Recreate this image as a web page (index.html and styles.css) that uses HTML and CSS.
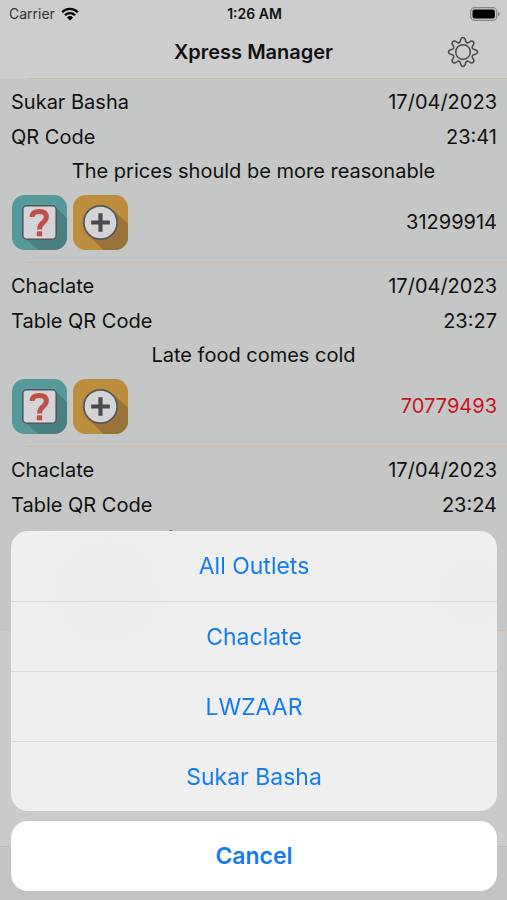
FILE: index.html
```html
<!DOCTYPE html>
<html lang="en">
<head>
<meta charset="utf-8">
<meta name="viewport" content="width=device-width, initial-scale=1">
<title>Xpress Manager</title>
<link rel="stylesheet" href="styles.css">
</head>
<body>
<svg class="defs" aria-hidden="true">
  <symbol id="icon-question" viewBox="0 0 56 56">
    <rect width="56" height="56" rx="13" fill="#55999a"/>
    <path d="M44 12 56 24V43A13 13 0 0 1 43 56H27L12 43Z" fill="#4a807f"/>
    <rect x="11" y="11" width="34" height="34" rx="4" fill="#d4d4d6" stroke="#55585b" stroke-width="1.6"/>
    <path d="M20.500 22.500C20.500 18 23.500 16.800 27.800 16.800S35 18.500 35 22.500C35 28 28 28 28 35" fill="none" stroke="#bd5148" stroke-width="5"/>
    <rect x="25.300" y="37" width="5.400" height="5" fill="#bd5148"/>
  </symbol>
  <symbol id="icon-plus" viewBox="0 0 56 56">
    <rect width="56" height="56" rx="13" fill="#bc8d3c"/>
    <path d="M41 16 56 29V43A13 13 0 0 1 43 56H31L15 40Z" fill="#987438"/>
    <circle cx="28" cy="28" r="17" fill="#d4d4d6" stroke="#55585b" stroke-width="1.800"/>
    <path d="M28 18.500V37.500M18.500 28H37.500" stroke="#484a4c" stroke-width="4.200"/>
  </symbol>
</svg>

<div class="app">
  <header class="header">
    <div class="status">
      <span class="carrier">Carrier
        <svg class="wifi" viewBox="0 0 18 14" aria-hidden="true">
          <path d="M1.200 5.200A11 11 0 0 1 16.800 5.200M4 8.200A7 7 0 0 1 14 8.200" fill="none" stroke="#000" stroke-width="2.300"/>
          <path d="M9 13.500 6 10.500A4.300 4.300 0 0 1 12 10.500Z"/>
        </svg>
      </span>
      <span class="clock">1:26 AM</span>
      <svg class="battery" viewBox="0 0 30 14" aria-hidden="true">
        <rect x=".7" y=".7" width="26" height="12.600" rx="3.800" fill="none" stroke="#888" stroke-width="1.200"/>
        <rect x="2.500" y="2.500" width="22.400" height="9" rx="2"/>
        <path d="M28 4.700Q30 5.500 30 7T28 9.300Z" fill="#888"/>
      </svg>
    </div>
    <div class="nav">
      <h1 class="title">Xpress Manager</h1>
      <button class="settings" type="button" aria-label="Settings">
        <svg viewBox="0 0 32 32" aria-hidden="true">
          <g fill="none" stroke="#4b4b4b" stroke-width="1.500" stroke-linejoin="round">
            <circle cx="16" cy="16" r="7.300"/>
            <path d="M13.300 5.300 C13.700 3.500 13.700 1.500 16 1.500 S18.300 3.500 18.700 5.300 C19.100 6.700 20.700 7.300 21.700 6.500 C23.200 5.500 24.700 4.100 26.300 5.700 S26.500 8.800 25.500 10.300 C24.700 11.300 25.300 12.900 26.700 13.300 C28.500 13.700 30.500 13.700 30.500 16 S28.500 18.300 26.700 18.700 C25.300 19.100 24.700 20.700 25.500 21.700 C26.500 23.200 27.900 24.700 26.300 26.300 S23.200 26.500 21.700 25.500 C20.700 24.700 19.100 25.300 18.700 26.700 C18.300 28.500 18.300 30.500 16 30.500 S13.700 28.500 13.300 26.700 C12.900 25.300 11.300 24.700 10.300 25.500 C8.800 26.500 7.300 27.900 5.700 26.300 S5.500 23.200 6.500 21.700 C7.300 20.700 6.700 19.100 5.300 18.700 C3.500 18.300 1.500 18.300 1.500 16 S3.500 13.700 5.300 13.300 C6.700 12.900 7.300 11.300 6.500 10.300 C5.500 8.800 4.100 7.300 5.700 5.700 S8.800 5.500 10.300 6.500 C11.300 7.300 12.900 6.700 13.300 5.300Z"/>
          </g>
        </svg>
      </button>
    </div>
  </header>

  <main class="list">
    <article class="row">
      <div class="line"><span>Sukar Basha</span><span>17/04/2023</span></div>
      <div class="line"><span>QR Code</span><span>23:41</span></div>
      <p class="comment">The prices should be more reasonable</p>
      <div class="actions">
        <button type="button" aria-label="Question"><svg><use href="#icon-question"/></svg></button>
        <button type="button" aria-label="Add"><svg><use href="#icon-plus"/></svg></button>
        <span class="phone">31299914</span>
      </div>
    </article>
    <article class="row">
      <div class="line"><span>Chaclate</span><span>17/04/2023</span></div>
      <div class="line"><span>Table QR Code</span><span>23:27</span></div>
      <p class="comment">Late food comes cold</p>
      <div class="actions">
        <button type="button" aria-label="Question"><svg><use href="#icon-question"/></svg></button>
        <button type="button" aria-label="Add"><svg><use href="#icon-plus"/></svg></button>
        <span class="phone alert">70779493</span>
      </div>
    </article>
    <article class="row">
      <div class="line"><span>Chaclate</span><span>17/04/2023</span></div>
      <div class="line"><span>Table QR Code</span><span>23:24</span></div>
      <p class="comment">food was delicious</p>
      <div class="actions"></div>
    </article>
  </main>
  <footer class="tabbar"></footer>
</div>

<div class="sheet" role="dialog" aria-label="Choose outlet">
  <div class="options">
    <button type="button">All Outlets</button>
    <button type="button">Chaclate</button>
    <button type="button">LWZAAR</button>
    <button type="button">Sukar Basha</button>
  </div>
  <button class="cancel" type="button">Cancel</button>
</div>
</body>
</html>
```
FILE: styles.css
```css
* { box-sizing: border-box; }

body {
  margin: 0;
  background: #cbcbcb;
  color: #111;
  font-family: Inter, "Liberation Sans", sans-serif;
  font-size: 20px;
}

button {
  padding: 0;
  border: 0;
  background: none;
  font: inherit;
  cursor: pointer;
}

svg { display: block; }

.defs {
  position: absolute;
  width: 0;
  height: 0;
}

.app {
  display: flex;
  flex-direction: column;
  min-height: 100vh;
}

.header { background: #cdcdcd; }

.status {
  display: grid;
  grid-template-columns: 1fr auto 1fr;
  align-items: center;
  height: 27px;
  padding: 0 7px 0 9px;
  font-size: 14px;
}

.carrier {
  display: flex;
  align-items: center;
  gap: 6px;
  color: #333;
}

.wifi {
  width: 18px;
  height: 14px;
}

.clock { font-weight: 600; }

.battery {
  justify-self: end;
  width: 30px;
  height: 14px;
}

.nav {
  display: grid;
  grid-template-columns: 1fr auto 1fr;
  align-items: center;
  height: 51px;
  padding: 0 28px 2px;
}

.title {
  grid-column: 2;
  margin: 0;
  font-size: 20px;
  font-weight: 600;
}

.settings { justify-self: end; }

.settings svg {
  width: 32px;
  height: 32px;
}

.list::before,
.row::after {
  content: "";
  display: block;
  height: 1px;
  margin-left: 27px;
  background: #cbbba8;
}

.list {
  flex: 1;
}

.row {
  background: #c5c7c6;
}

.line {
  display: flex;
  justify-content: space-between;
  padding: 0 10px 0 11px;
  line-height: 35px;
}

.row .line:first-child {
  padding-top: 6px;
}

.comment {
  margin: 0;
  line-height: 32px;
  text-align: center;
}

.actions {
  display: flex;
  align-items: center;
  gap: 6px;
  height: 75px;
  padding: 3px 10px 8px 12px;
}

.actions svg {
  width: 55px;
  height: 55px;
}

.phone { margin-left: auto; }

.alert { color: #c8141e; }

.tabbar {
  height: 54px;
  border-top: 1px solid #b9b9b9;
  background: #c4c4c4;
}

.sheet {
  position: fixed;
  right: 10px;
  bottom: 9px;
  left: 11px;
  display: grid;
  gap: 10px;
  color: #147cf0;
  font-size: 23px;
}

.sheet button {
  height: 70px;
  color: inherit;
}

.options {
  display: grid;
  overflow: hidden;
  border-radius: 17px;
  background:
    radial-gradient(circle at 95px 60px, #edece9, transparent 90px),
    radial-gradient(circle at 460px 60px, #efecea, transparent 60px),
    #efefef;
}

.options button + button {
  border-top: 1px solid #d9d9d9;
}

.sheet .cancel {
  border-radius: 17px;
  background: #fff;
  font-weight: 600;
}
```
